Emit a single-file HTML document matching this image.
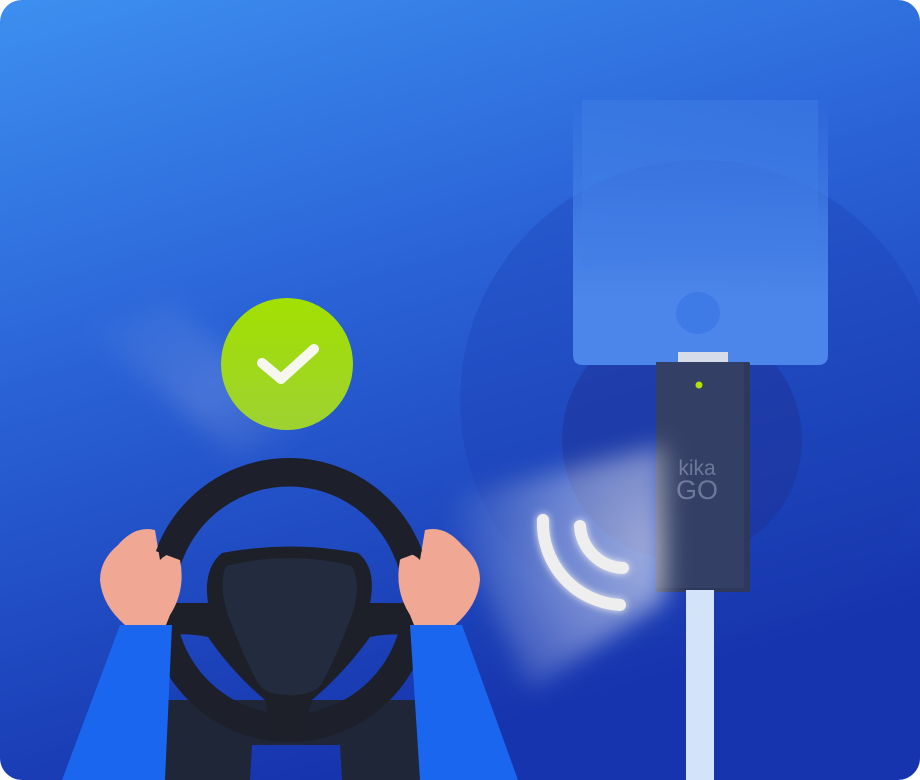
<!DOCTYPE html>
<html><head><meta charset="utf-8"><style>
html,body{margin:0;padding:0;background:#fff;width:920px;height:780px;overflow:hidden}
</style></head><body>
<svg width="920" height="780" viewBox="0 0 920 780" xmlns="http://www.w3.org/2000/svg">
<defs>
<linearGradient id="bg" x1="0" y1="0" x2="0.35" y2="1">
<stop offset="0" stop-color="#3d8ff0"/><stop offset="0.45" stop-color="#2a62d6"/><stop offset="1" stop-color="#1634ad"/>
</linearGradient>
<linearGradient id="phone" x1="0" y1="0" x2="0" y2="1">
<stop offset="0" stop-color="#4a8ced" stop-opacity="0"/><stop offset="0.45" stop-color="#4a88ec" stop-opacity="0.7"/><stop offset="0.75" stop-color="#4c86ea"/>
</linearGradient>
<linearGradient id="chk" x1="0" y1="0" x2="0" y2="1">
<stop offset="0" stop-color="#a2e000"/><stop offset="1" stop-color="#9ed232"/>
</linearGradient>
<radialGradient id="beamR" cx="1" cy="0.45" r="1">
<stop offset="0" stop-color="#ffffff" stop-opacity="0.6"/><stop offset="0.5" stop-color="#ffffff" stop-opacity="0.35"/><stop offset="1" stop-color="#ffffff" stop-opacity="0"/>
</radialGradient>
<linearGradient id="beam2" x1="0" y1="0" x2="1" y2="1">
<stop offset="0" stop-color="#ffffff" stop-opacity="0"/><stop offset="0.6" stop-color="#ffffff" stop-opacity="0.15"/><stop offset="1" stop-color="#ffffff" stop-opacity="0"/>
</linearGradient>
<filter id="glow" x="-50%" y="-50%" width="200%" height="200%"><feGaussianBlur stdDeviation="4" result="b"/><feMerge><feMergeNode in="b"/><feMergeNode in="SourceGraphic"/></feMerge></filter>
<filter id="blur8" x="-20%" y="-20%" width="140%" height="140%"><feGaussianBlur stdDeviation="12"/></filter>
<clipPath id="card"><rect x="0" y="0" width="920" height="780" rx="22"/></clipPath>
</defs>
<g clip-path="url(#card)">
<rect width="920" height="780" fill="url(#bg)"/>
<polygon points="90,330 170,300 300,420 240,460" fill="url(#beam2)" filter="url(#blur8)"/>
<circle cx="700" cy="400" r="240" fill="#1a3cae" opacity="0.3"/>
<circle cx="682" cy="440" r="120" fill="#1d3296" opacity="0.5"/>
<!-- phone -->
<path d="M573,100 H828 V355 Q828,365 818,365 H583 Q573,365 573,355 Z" fill="url(#phone)"/>
<path d="M582,100 H818 V258 Q700,250 582,268 Z" fill="#3f7ee6" opacity="0.5"/>
<ellipse cx="698" cy="313" rx="22" ry="21" fill="#3f7be6"/>
<rect x="678" y="352" width="50" height="10" fill="#d6dcea"/>
<!-- device -->
<rect x="656" y="362" width="94" height="230" rx="2" fill="#2e385c"/>
<rect x="656" y="362" width="88" height="226" fill="#343f66"/>
<circle cx="699" cy="385" r="3.5" fill="#b4e000"/>
<text x="697" y="475" text-anchor="middle" font-family="Liberation Sans, sans-serif" font-size="21" fill="#6d7799">kika</text>
<text x="697" y="499" text-anchor="middle" font-family="Liberation Sans, sans-serif" font-size="27" fill="#6d7799">GO</text>
<rect x="686" y="590" width="28" height="190" fill="#d4e4f8"/>
<!-- beam -->
<polygon points="665,445 665,600 530,690 440,500" fill="url(#beamR)" filter="url(#blur8)"/>
<g filter="url(#glow)" fill="none" stroke="#eeeeee" stroke-width="12" stroke-linecap="round">
<path d="M543,520 A82,82 0 0 0 620,605"/>
<path d="M580,526 A45,45 0 0 0 623,568"/>
</g>
<!-- steering column -->
<path d="M160,700 H425 L420,780 H342 L340,745 H252 L250,780 H165 Z" fill="#1f2638"/>
<!-- rim lower -->
<circle cx="289" cy="600" r="128" fill="none" stroke="#1d1f2a" stroke-width="28"/>
<!-- spokes -->
<path d="M160,603 H208 Q203,568 222,553 Q290,540 358,553 Q377,568 370,603 H420 V636 Q395,632 370,637 Q345,672 312,700 L302,735 H272 L265,700 Q232,672 208,637 Q185,632 160,636 Z" fill="#1d1f29"/>
<!-- hub -->
<path d="M226,566 Q290,550 352,566 Q362,585 352,615 Q335,660 322,683 Q315,695 290,695 Q265,695 258,683 Q245,660 228,615 Q218,585 226,566 Z" fill="#222c3e"/>
<!-- arms -->
<path d="M120,625 L172,625 L165,780 L62,780 Z" fill="#1a66ee"/>
<path d="M410,625 L462,625 L518,780 L420,780 Z" fill="#1a66ee"/>
<!-- hands -->
<path d="M118,545 Q135,525 155,530 L160,560 Q172,548 180,560 Q186,590 170,615 L166,625 H125 Q102,605 100,580 Q100,560 118,545 Z" fill="#f0a894"/>
<path d="M462,545 Q445,525 425,530 L420,560 Q408,548 400,560 Q394,590 410,615 L414,625 H455 Q478,605 480,580 Q480,560 462,545 Z" fill="#f0a894"/>
<!-- rim upper over hands -->
<path d="M169,556 A128,128 0 0 1 409,556" fill="none" stroke="#1d1f2a" stroke-width="28"/>
<!-- check badge -->
<circle cx="287" cy="364" r="66" fill="url(#chk)"/>
<polyline points="262,363 281,379 314,349" fill="none" stroke="#f6f8f0" stroke-width="10" stroke-linecap="round" stroke-linejoin="round"/>
</g>
</svg>
</body></html>
